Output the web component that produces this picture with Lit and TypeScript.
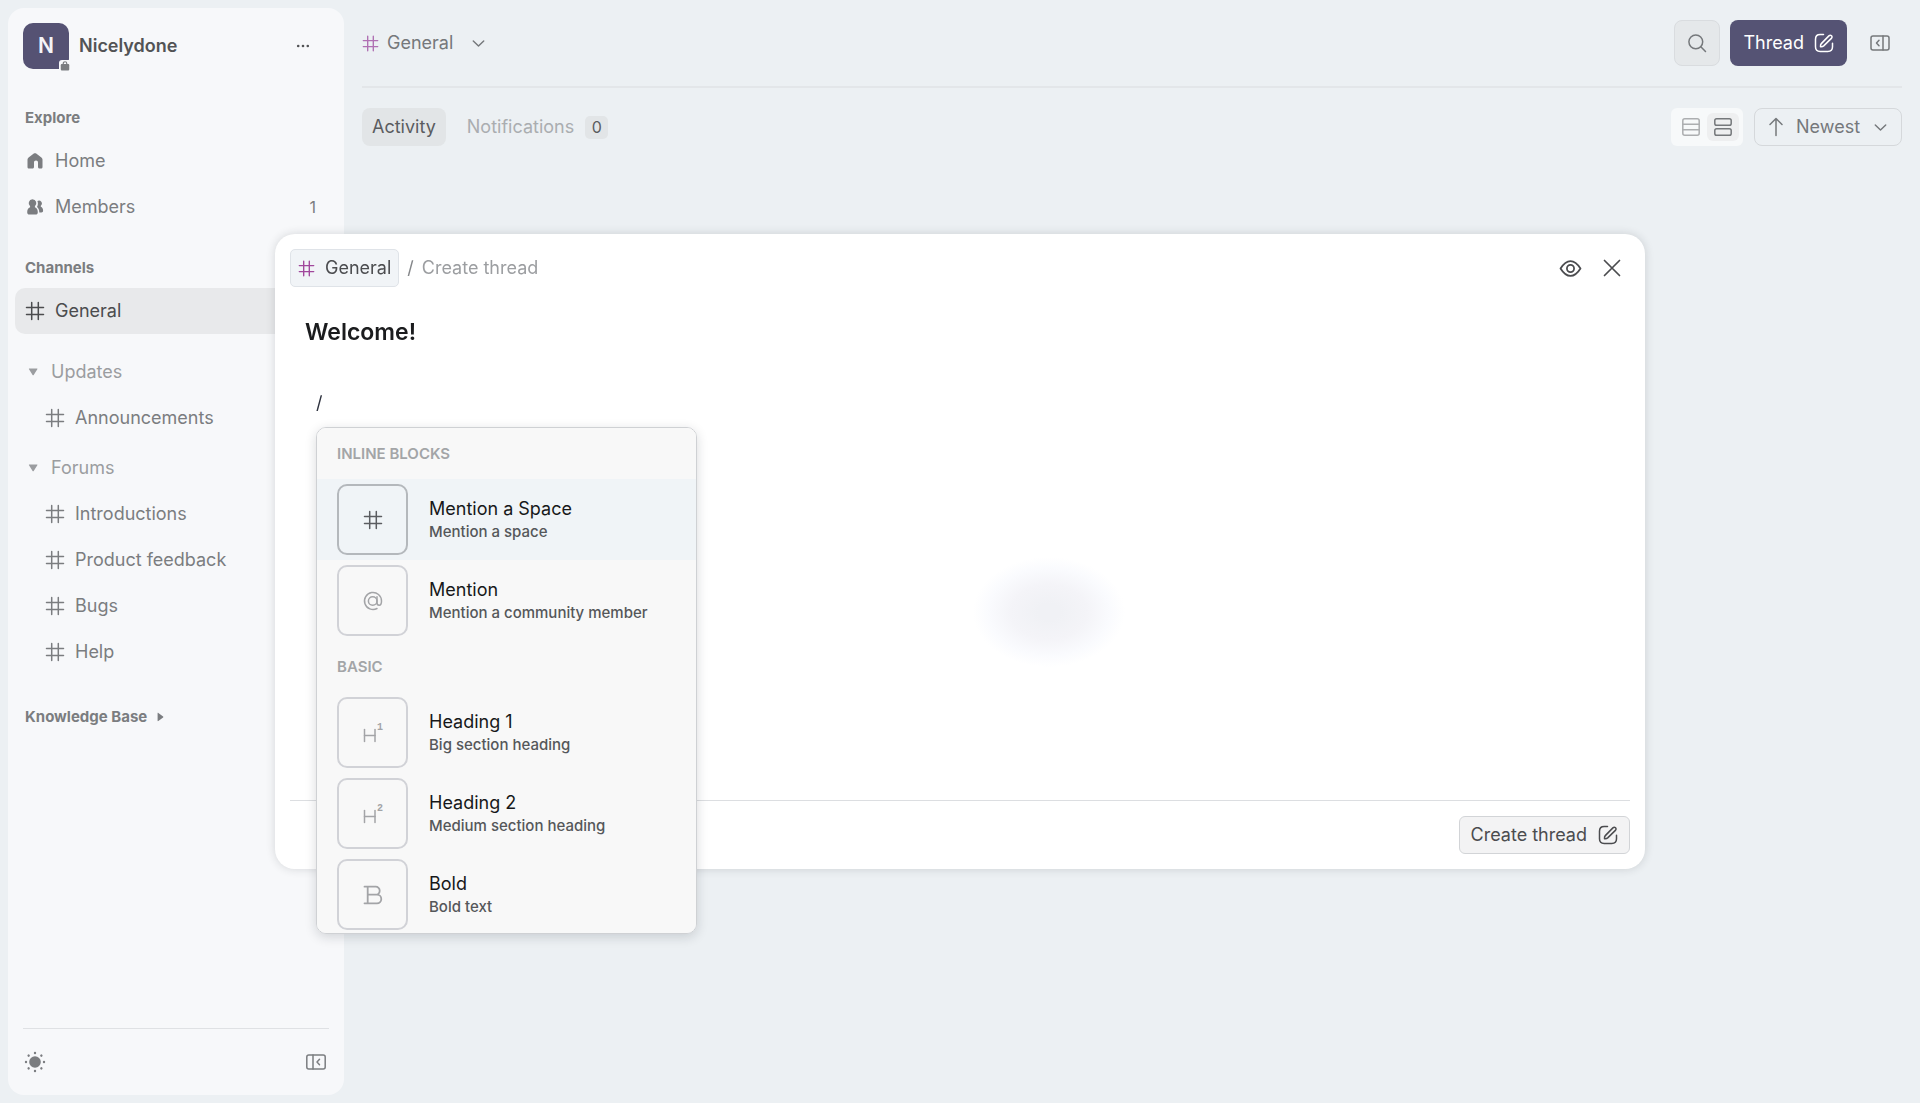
import { LitElement, html, svg, css, nothing } from "lit";
import { customElement, property, state } from "lit/decorators.js";
import { classMap } from "lit/directives/class-map.js";

const shapes: Record<string, unknown> = {
  hash: svg`<path d="M6.7 1.5v17M13.3 1.5v17M1.5 6.6h17M1.5 13.6h17"/>`,
  home: svg`<path class="solid" d="M2.5 8.6c0-.9.4-1.6 1.1-2.1l5.2-3.9c.7-.5 1.7-.5 2.4 0l5.2 3.9c.7.5 1.1 1.2 1.1 2.1v7.4c0 1-.7 1.6-1.6 1.6h-1.4c-.9 0-1.5-.6-1.5-1.5V11.5c0-1.3-.7-2-2-2s-2 .7-2 2v4.6c0 .9-.6 1.5-1.5 1.5H4.1c-.9 0-1.6-.6-1.6-1.6z"/>`,
  members: svg`<path class="solid" d="M7.4 2.3a3.9 3.9 0 0 1 2.5 6.9v1c1.9.5 2.9 2.4 2.9 5 0 1.6-.8 2.3-2.2 2.3H4.4c-1.4 0-2.2-.7-2.2-2.3 0-2.6 1-4.5 2.9-5v-1a3.9 3.9 0 0 1 2.3-6.9zM12.4 3.9a3 3 0 0 1 3.4 4.9v1c1.5.4 2.3 2 2.3 4 0 1.2-.6 1.7-1.7 1.7h-2.1c0-2.6-.8-4.5-2.3-5.6 1.1-1.7 1.2-4.2.4-6z"/>`,
  bag: svg`<path d="M6.5 7V5a3.5 3.5 0 0 1 7 0v2" stroke-width="2.4"/><path class="solid" d="M4 6h12c1.5 0 2.5 1 2.5 2.5V16c0 2-1 3-3 3h-11c-2 0-3-1-3-3V8.5C1.5 7 2.5 6 4 6z"/>`,
  dots: svg`<circle class="solid" cx="5.2" cy="10" r="1.3"/><circle class="solid" cx="10" cy="10" r="1.3"/><circle class="solid" cx="14.8" cy="10" r="1.3"/>`,
  down: svg`<path class="solid" d="M5.5 5.5h9.4c.6 0 .9.6.5 1.1l-4.5 7c-.3.5-1.1.5-1.4 0L5 6.6c-.4-.5-.1-1.1.5-1.1z"/>`,
  right: svg`<path class="solid" d="M7 5.3v9.4c0 .5.5.7.9.4l6-4.5c.4-.3.4-.9 0-1.2l-6-4.5c-.4-.3-.9-.1-.9.4z"/>`,
  chevron: svg`<path d="M4.5 7.3 10 12.7l5.5-5.4"/>`,
  search: svg`<circle cx="8.8" cy="8.8" r="6.9"/><path d="m13.8 13.8 4.7 4.7"/>`,
  compose: svg`<path d="M9.5 1.5H6.2C3 1.5 1.5 3 1.5 6.2v7.6c0 3.2 1.5 4.7 4.7 4.7h7.6c3.2 0 4.7-1.5 4.7-4.7v-3.6"/><path d="m7.3 10.6 7.6-7.7c.8-.8 1.9-.8 2.6-.1.7.7.7 1.8-.1 2.6l-7.7 7.5c-.8.7-2 .9-3.2.8-.1-1.2.1-2.4.8-3.1z"/>`,
  panelLeft: svg`<rect x=".8" y="3" width="18.4" height="14" rx="2"/><path d="M7 3v14M13.5 7.3 11 10l2.5 2.7"/>`,
  panelRight: svg`<rect x="1" y="3" width="18" height="14" rx="2"/><path d="M13 3v14M9 7.3 6.5 10 9 12.7"/>`,
  rows: svg`<rect x="1.8" y="1.8" width="16.4" height="16.4" rx="2"/><path d="M2 7.3h16M2 12.7h16"/>`,
  cards: svg`<rect x="1.8" y="1.8" width="16.4" height="6.4" rx="1.8"/><rect x="1.8" y="11.8" width="16.4" height="6.4" rx="1.8"/>`,
  up: svg`<path d="M10 18.5v-17M4 7.5l6-6 6 6"/>`,
  eye: svg`<path d="M.5 10C3 6 6 2.9 10 2.9s7 3.1 9.5 7.1c-2.5 4-5.5 7.1-9.5 7.1S3 14 .5 10z"/><circle cx="10" cy="10" r="3.4"/>`,
  close: svg`<path d="m2.5 2.5 15 15M17.5 2.5l-15 15"/>`,
  sun: svg`<circle class="solid" cx="10" cy="10" r="5.8"/>${[0, 45, 90, 135, 180, 225, 270, 315].map(
    (a) => svg`<circle class="solid" cx="10" cy="1" r="1.2" transform="rotate(${a} 10 10)"/>`
  )}`,
  at: svg`<circle cx="9.7" cy="10" r="4.3"/><path d="M14 5.8v5.9c0 1.7.9 2.5 2.2 2.5 1.6 0 2.3-1.6 2.3-4.2a8.500 8.500 0 1 0-4.500 7.500"/>`,
  heading1: svg`<line x1="1.5" y1="6.5" x2="1.5" y2="18.5"/><line x1="12" y1="6.5" x2="12" y2="18.5"/><line x1="1.5" y1="12.5" x2="12" y2="12.5"/><text x="14" y="7">1</text>`,
  heading2: svg`<line x1="1.5" y1="6.5" x2="1.5" y2="18.5"/><line x1="12" y1="6.5" x2="12" y2="18.5"/><line x1="1.5" y1="12.5" x2="12" y2="12.5"/><text x="14" y="7">2</text>`,
  bold: svg`<path stroke-width="1.8" d="M1.500 1.700h11.200a4 4 0 0 1 0 8H4.700M12.700 9.700h1.300a4.300 4.300 0 0 1 0 8.600H1.500M4.700 1.700v16.600"/>`,
};

@customElement("ui-icon")
export class UiIcon extends LitElement {
  @property() name = "";
  @property({ type: Number }) size = 20;
  @property({ type: Number }) weight = 1.5;

  static styles = css`
    :host {
      display: inline-flex;
      flex: none;
    }
    svg {
      display: block;
      overflow: visible;
      fill: none;
      stroke: currentColor;
      stroke-linecap: round;
      stroke-linejoin: round;
    }
    .solid,
    text {
      fill: currentColor;
      stroke: none;
    }
    text {
      font: 700 10px "Liberation Mono", monospace;
    }
  `;

  render() {
    return html`<svg
      width=${this.size}
      height=${this.size}
      viewBox="0 0 20 20"
      stroke-width=${this.weight}
      aria-hidden="true"
    >
      ${shapes[this.name]}
    </svg>`;
  }
}

const reset = css`
  *,
  *::before {
    box-sizing: border-box;
  }
  button,
  input,
  textarea,
  select {
    margin: 0;
    padding: 0;
    border: 0;
    background: none;
    font: inherit;
    color: inherit;
    outline: none;
  }
  button,
  select {
    cursor: pointer;
  }
  a {
    color: inherit;
    text-decoration: none;
  }
  h1,
  h2,
  h3,
  p,
  ul {
    margin: 0;
    padding: 0;
    font: inherit;
    list-style: none;
  }
  .plain {
    display: flex;
    align-items: center;
  }
`;

interface Group {
  title: string;
  channels: string[];
}

const groups: Group[] = [
  { title: "Updates", channels: ["Announcements"] },
  { title: "Forums", channels: ["Introductions", "Product feedback", "Bugs", "Help"] },
];

@customElement("side-bar")
export class SideBar extends LitElement {
  static styles = [
    reset,
    css`
      :host {
        display: flex;
        flex-direction: column;
        flex: none;
        width: 336px;
        padding: 15px 7px 0;
        border-radius: 16px;
        background: #f7f8fa;
        color: #7b7d80;
      }
      .brand {
        display: flex;
        align-items: center;
        gap: 10px;
        padding: 0 24px 0 8px;
        color: #525355;
        font-weight: 600;
      }
      .avatar {
        position: relative;
        display: grid;
        place-items: center;
        width: 46px;
        height: 46px;
        border-radius: 10px;
        background: #555273;
        color: #f4f4f8;
        font-size: 21px;
      }
      .badge {
        position: absolute;
        right: -1px;
        bottom: -2px;
        display: grid;
        padding: 1px 0 0 1px;
        border-radius: 3px 0 0 0;
        background: #f7f8fa;
        color: #7b7d80;
      }
      .name {
        flex: 1;
      }
      .label {
        display: flex;
        align-items: center;
        gap: 5px;
        padding: 0 10px;
        font-size: 15px;
        line-height: 20px;
        font-weight: 700;
        color: #7b7d80;
      }
      .explore {
        margin: 39px 0 10px;
      }
      .channels {
        margin: 28px 0 10px;
      }
      .knowledge {
        margin-top: 32px;
      }
      .row {
        display: flex;
        align-items: center;
        gap: 10px;
        width: 100%;
        height: 46px;
        padding: 0 21px 0 10px;
        border-radius: 10px;
      }
      .row .text {
        flex: 1;
        text-align: left;
      }
      .count {
        font-size: 16px;
      }
      .active {
        background: #e8e9eb;
        color: #4b4c4e;
      }
      .group {
        color: #9b9da0;
      }
      .first {
        margin-top: 15px;
      }
      .next {
        margin-top: 4px;
      }
      .nested {
        padding-left: 30px;
      }
      .footer {
        display: flex;
        justify-content: space-between;
        align-items: center;
        height: 67px;
        margin: auto 8px 0;
        padding: 0 3px 0 2px;
        border-top: 1px solid #dfe1e4;
      }
    `,
  ];

  render() {
    return html`
      <div class="brand">
        <span class="avatar">N<span class="badge"><ui-icon name="bag" size="10"></ui-icon></span></span>
        <span class="name">Nicelydone</span>
        <button class="plain" aria-label="Community menu"><ui-icon name="dots"></ui-icon></button>
      </div>
      <h2 class="label explore">Explore</h2>
      <a class="row" href="#home"><ui-icon name="home"></ui-icon><span class="text">Home</span></a>
      <a class="row" href="#members">
        <ui-icon name="members"></ui-icon><span class="text">Members</span><span class="count">1</span>
      </a>
      <h2 class="label channels">Channels</h2>
      <a class="row active" href="#general"><ui-icon name="hash"></ui-icon><span class="text">General</span></a>
      ${groups.map(
        (g, i) => html`
          <button class=${classMap({ row: true, group: true, first: i === 0, next: i > 0 })} aria-expanded="true">
            <ui-icon name="down" size="16"></ui-icon><span class="text">${g.title}</span>
          </button>
          ${g.channels.map(
            (c) => html`<a class="row nested" href="#${c.toLowerCase().replace(" ", "-")}">
              <ui-icon name="hash"></ui-icon><span class="text">${c}</span>
            </a>`
          )}
        `
      )}
      <button class="label knowledge" aria-expanded="false">
        Knowledge Base <ui-icon name="right" size="16"></ui-icon>
      </button>
      <div class="footer">
        <button class="plain" aria-label="Light theme"><ui-icon name="sun"></ui-icon></button>
        <button class="plain" aria-label="Collapse sidebar"><ui-icon name="panelLeft"></ui-icon></button>
      </div>
    `;
  }
}

@customElement("feed-page")
export class FeedPage extends LitElement {
  static styles = [
    reset,
    css`
      :host {
        display: block;
        flex: 1;
        min-width: 0;
        padding: 0 18px;
        color: #75787b;
      }
      .bar,
      .tools,
      .side {
        display: flex;
        align-items: center;
      }
      .bar {
        height: 88px;
        justify-content: space-between;
        border-bottom: 2px solid #e3e6e9;
      }
      .title {
        display: flex;
        align-items: center;
        gap: 8px;
      }
      .hash {
        color: #b070b3;
      }
      .caret {
        margin-left: 8px;
      }
      .actions {
        display: flex;
        align-items: center;
        gap: 10px;
      }
      .square {
        display: grid;
        place-items: center;
        width: 46px;
        height: 46px;
        border: 1px solid #d9dcdf;
        border-radius: 8px;
        background: #e5e8ea;
      }
      .thread {
        display: flex;
        align-items: center;
        gap: 10px;
        height: 46px;
        padding: 0 13px;
        border-radius: 8px;
        background: #555374;
        color: #fff;
      }
      .panel {
        display: grid;
        place-items: center;
        width: 45px;
        height: 46px;
      }
      .tools {
        justify-content: space-between;
        margin-top: 20px;
      }
      .side {
        gap: 11px;
      }
      .tab {
        display: flex;
        align-items: center;
        gap: 11px;
        height: 38px;
        padding: 0 10px;
        border-radius: 8px;
        color: #aaadb0;
      }
      .current {
        background: #e2e5e7;
        color: #5a5c5f;
      }
      .count {
        min-width: 23px;
        border-radius: 5px;
        background: #e2e5e7;
        color: #5a5c5f;
        font-size: 16px;
        line-height: 23px;
        text-align: center;
      }
      .views {
        display: flex;
        align-items: center;
        height: 38px;
        padding: 0 4px;
        border-radius: 6px;
        background: #f7f9fa;
      }
      .view {
        display: grid;
        place-items: center;
        width: 32px;
        height: 28px;
        border-radius: 6px;
        color: #acaeb0;
      }
      .picked {
        background: #eeeff0;
        color: #75787b;
      }
      .sort {
        display: flex;
        align-items: center;
        gap: 10px;
        height: 38px;
        padding: 0 11px;
        border: 1px solid #d5d8db;
        border-radius: 8px;
      }
      .select {
        appearance: none;
      }
    `,
  ];

  render() {
    return html`
      <header class="bar">
        <h1 class="title">
          <ui-icon class="hash" name="hash" size="17" weight="1.6"></ui-icon>General
          <button class="plain caret" aria-label="Channel menu"><ui-icon name="chevron" size="19"></ui-icon></button>
        </h1>
        <div class="actions">
          <button class="square" aria-label="Search"><ui-icon name="search"></ui-icon></button>
          <button class="thread">Thread <ui-icon name="compose"></ui-icon></button>
          <button class="panel" aria-label="Open side panel"><ui-icon name="panelRight"></ui-icon></button>
        </div>
      </header>
      <div class="tools">
        <nav class="side">
          <button class="tab current">Activity</button>
          <button class="tab">Notifications <span class="count">0</span></button>
        </nav>
        <div class="side">
          <div class="views">
            <button class="view" aria-label="List view" aria-pressed="false"><ui-icon name="rows"></ui-icon></button>
            <button class="view picked" aria-label="Card view" aria-pressed="true">
              <ui-icon name="cards"></ui-icon>
            </button>
          </div>
          <label class="sort">
            <ui-icon name="up"></ui-icon>
            <select class="select" aria-label="Sort order">
              <option>Newest</option>
            </select>
            <ui-icon name="chevron" size="19"></ui-icon>
          </label>
        </div>
      </div>
    `;
  }
}

interface Block {
  icon: string;
  title: string;
  text: string;
}

const sections: { title: string; blocks: Block[] }[] = [
  {
    title: "INLINE BLOCKS",
    blocks: [
      { icon: "hash", title: "Mention a Space", text: "Mention a space" },
      { icon: "at", title: "Mention", text: "Mention a community member" },
    ],
  },
  {
    title: "BASIC",
    blocks: [
      { icon: "heading1", title: "Heading 1", text: "Big section heading" },
      { icon: "heading2", title: "Heading 2", text: "Medium section heading" },
      { icon: "bold", title: "Bold", text: "Bold text" },
    ],
  },
];

@customElement("slash-menu")
export class SlashMenu extends LitElement {
  @state() private picked = "Mention a Space";

  static styles = [
    reset,
    css`
      :host {
        display: block;
        box-sizing: border-box;
        width: 381px;
        height: 507px;
        overflow-y: auto;
        scrollbar-width: none;
        border: 1px solid #cfd1d4;
        border-radius: 10px;
        background: #f8f8f8;
        box-shadow: 0 3px 12px rgba(20, 25, 35, 0.16);
      }
      .heading {
        padding: 0 20px;
        font-size: 15px;
        line-height: 51px;
        font-weight: 600;
        color: #a3a5a7;
      }
      .item {
        display: flex;
        align-items: center;
        gap: 21px;
        width: 100%;
        height: 81px;
        padding: 0 20px;
        text-align: left;
      }
      .tile {
        display: grid;
        place-items: center;
        width: 71px;
        height: 71px;
        border: 2px solid #d1d2d7;
        border-radius: 10px;
        color: #a3a4a7;
      }
      .title {
        line-height: 24px;
        color: #17181a;
      }
      .text {
        font-size: 15px;
        line-height: 21px;
        font-weight: 450;
        color: #55575a;
      }
      .picked {
        background: #f0f4f7;
      }
      .picked .tile {
        border-color: #b4b8bc;
        color: #5b5d61;
      }
    `,
  ];

  render() {
    return sections.map(
      (s) => html`
        <h3 class="heading">${s.title}</h3>
        ${s.blocks.map(
          (b) => html`<button
            class=${classMap({ item: true, picked: b.title === this.picked })}
            @mouseenter=${() => (this.picked = b.title)}
          >
            <span class="tile"><ui-icon name=${b.icon}></ui-icon></span>
            <span>
              <p class="title">${b.title}</p>
              <p class="text">${b.text}</p>
            </span>
          </button>`
        )}
      `
    );
  }
}

@customElement("thread-dialog")
export class ThreadDialog extends LitElement {
  @state() private body = "/";

  static styles = [
    reset,
    css`
      :host {
        display: flex;
        flex-direction: column;
        box-sizing: border-box;
        width: min(1370px, 100%);
        padding: 15px;
        border-radius: 20px;
        background: #fff;
        box-shadow: 0 0 10px rgba(30, 35, 45, 0.16);
        color: #4b4c4f;
      }
      .head {
        display: flex;
        align-items: center;
        gap: 8px;
        padding-right: 2px;
      }
      .chip {
        display: flex;
        align-items: center;
        gap: 10px;
        height: 38px;
        padding: 0 7px;
        border: 1px solid #dfe3e8;
        border-radius: 5px;
        background: #f1f4f7;
      }
      .hash {
        color: #a1479c;
      }
      .slash {
        color: #85878a;
      }
      .crumb {
        flex: 1;
        color: #9c9ea1;
      }
      .icon {
        display: grid;
        place-items: center;
        width: 33px;
        height: 33px;
      }
      .form {
        display: flex;
        flex-direction: column;
        padding: 29px 15px 0;
      }
      .name {
        font-size: 23px;
        line-height: 32px;
        font-weight: 600;
        color: #1b1c1e;
      }
      .editor {
        position: relative;
        margin-top: 41px;
        padding: 0 11px;
      }
      .content {
        display: block;
        width: 100%;
        height: 411px;
        resize: none;
        line-height: 28px;
        color: #303440;
      }
      .menu {
        position: absolute;
        top: 38px;
        left: 11px;
      }
      .glow {
        position: absolute;
        top: 168px;
        left: 51%;
        width: 152px;
        height: 110px;
        background: radial-gradient(closest-side, #f0f1f5 15%, #f4f4f8 50%, #fafbfe 80%, #fff 100%);
      }
      .foot {
        display: flex;
        justify-content: flex-end;
        padding-top: 15px;
        border-top: 1px solid #dcdee1;
      }
      .submit {
        display: flex;
        align-items: center;
        gap: 11px;
        height: 38px;
        padding: 0 11px;
        border: 1px solid #d2d4d7;
        border-radius: 6px;
        background: #f3f3f4;
      }
    `,
  ];

  render() {
    return html`
      <div class="head">
        <button class="chip"><ui-icon class="hash" name="hash" size="17" weight="1.6"></ui-icon>General</button>
        <span class="slash">/</span>
        <h2 class="crumb">Create thread</h2>
        <button class="icon" aria-label="Preview"><ui-icon name="eye" size="21" weight="1.7"></ui-icon></button>
        <button class="icon" aria-label="Close"><ui-icon name="close" weight="1.7"></ui-icon></button>
      </div>
      <div class="form">
        <input class="name" aria-label="Thread title" .value=${"Welcome!"} />
        <div class="editor">
          <textarea
            class="content"
            aria-label="Thread body"
            .value=${this.body}
            @input=${(e: Event) => (this.body = (e.target as HTMLTextAreaElement).value)}
          ></textarea>
          <div class="glow"></div>
          ${this.body.endsWith("/") ? html`<slash-menu class="menu"></slash-menu>` : nothing}
        </div>
      </div>
      <div class="foot">
        <button class="submit">Create thread <ui-icon name="compose"></ui-icon></button>
      </div>
    `;
  }
}

@customElement("app-root")
export class AppRoot extends LitElement {
  static styles = [
    reset,
    css`
      :host {
        display: block;
        font: 400 18px/24px Inter, "Liberation Sans", sans-serif;
        background: #ecf0f3;
      }
      .page {
        display: flex;
        min-height: 100vh;
        padding: 8px 0 8px 8px;
      }
      .feed {
        margin-top: -8px;
      }
      .overlay {
        position: fixed;
        inset: 0;
        display: grid;
        place-items: center;
      }
    `,
  ];

  render() {
    return html`
      <div class="page">
        <side-bar></side-bar>
        <feed-page class="feed"></feed-page>
      </div>
      <div class="overlay"><thread-dialog role="dialog" aria-label="Create thread"></thread-dialog></div>
    `;
  }
}
